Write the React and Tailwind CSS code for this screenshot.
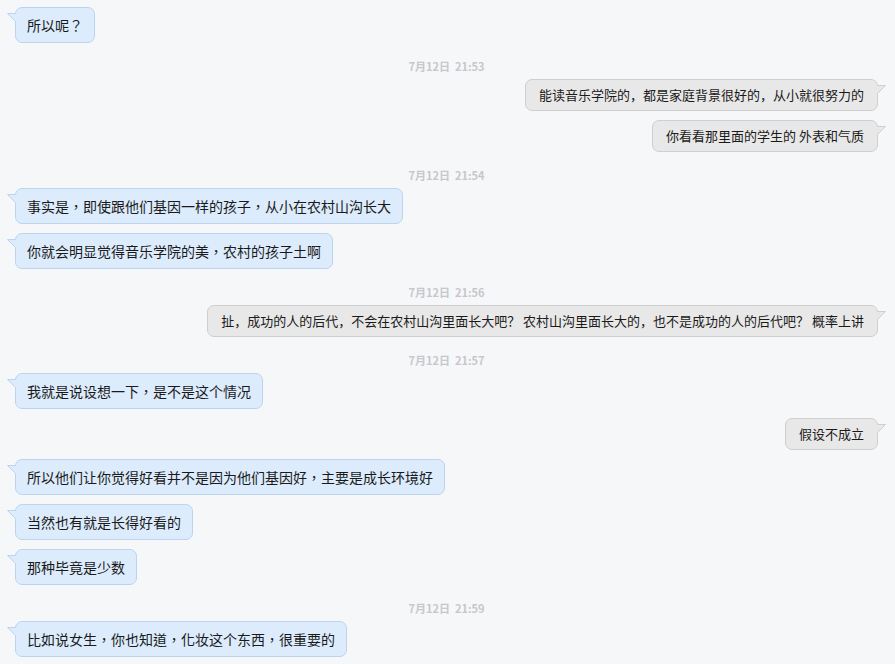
import React from "react";

const msgs = [
  { t: "l", s: "所以呢？" },
  { t: "ts", s: "7月12日  21:53" },
  { t: "r", s: "能读音乐学院的，都是家庭背景很好的，从小就很努力的" },
  { t: "r", s: "你看看那里面的学生的 外表和气质" },
  { t: "ts", s: "7月12日  21:54" },
  { t: "l", s: "事实是，即使跟他们基因一样的孩子，从小在农村山沟长大" },
  { t: "l", s: "你就会明显觉得音乐学院的美，农村的孩子土啊" },
  { t: "ts", s: "7月12日  21:56" },
  {
    t: "r",
    s: "扯，成功的人的后代，不会在农村山沟里面长大吧？ 农村山沟里面长大的，也不是成功的人的后代吧？ 概率上讲",
  },
  { t: "ts", s: "7月12日  21:57" },
  { t: "l", s: "我就是说设想一下，是不是这个情况" },
  { t: "r", s: "假设不成立" },
  { t: "l", s: "所以他们让你觉得好看并不是因为他们基因好，主要是成长环境好" },
  { t: "l", s: "当然也有就是长得好看的" },
  { t: "l", s: "那种毕竟是少数" },
  { t: "ts", s: "7月12日  21:59" },
  { t: "l", s: "比如说女生，你也知道，化妆这个东西，很重要的" },
];

function LeftTail() {
  return (
    <svg
      className="absolute left-[-9px] top-[5px]"
      width="10"
      height="10"
      viewBox="0 0 10 10"
    >
      <polygon points="0.5,0.5 10,0.5 10,10 8.5,8.5" fill="#dcecfc" />
      <polyline
        points="8.6,0.5 0.5,0.5 8.6,8.6"
        fill="none"
        stroke="#bcd4ee"
        strokeWidth="1"
      />
    </svg>
  );
}

function RightTail() {
  return (
    <svg
      className="absolute right-[-9px] top-[5px]"
      width="10"
      height="10"
      viewBox="0 0 10 10"
    >
      <polygon points="9.5,0.5 0,0.5 0,10 1.5,8.5" fill="#e8e8e8" />
      <polyline
        points="1.4,0.5 9.5,0.5 1.4,8.6"
        fill="none"
        stroke="#cfcfcf"
        strokeWidth="1"
      />
    </svg>
  );
}

export default function App() {
  return (
    <div
      className="min-h-screen w-full bg-[#f6f7f9] pl-[15px] pr-[17px] pt-[7px] pb-[9px] flex flex-col"
      style={{ fontFamily: '"Noto Sans CJK SC", "Noto Sans", sans-serif' }}
    >
      {msgs.map((m, i) => {
        const prev = i > 0 ? msgs[i - 1] : null;
        let mt = "";
        if (prev) {
          if (m.t === "ts") mt = "mt-[15px]";
          else if (prev.t === "ts") mt = "mt-[5px]";
          else mt = "mt-[9px]";
        }
        if (m.t === "ts") {
          return (
            <div
              key={i}
              className={`${mt} h-4 leading-4 text-center text-[11px] font-bold text-[#c6c8cb] whitespace-pre`}
            >
              {m.s}
            </div>
          );
        }
        if (m.t === "l") {
          return (
            <div key={i} className={`${mt} flex justify-start`}>
              <div className="relative rounded-[7px] border border-[#bcd4ee] bg-[#dcecfc] px-[11px] py-[7px] text-[14px] leading-[20px] text-[#1a1a1a] whitespace-nowrap font-['Noto_Sans_CJK_TC',sans-serif]">
                <LeftTail />
                {m.s}
              </div>
            </div>
          );
        }
        return (
          <div key={i} className={`${mt} flex justify-end`}>
            <div className="relative rounded-[7px] border border-[#cfcfcf] bg-[#e8e8e8] px-[13px] py-[6px] text-[13px] leading-[18px] text-[#1a1a1a] whitespace-pre">
              <RightTail />
              {m.s}
            </div>
          </div>
        );
      })}
    </div>
  );
}
